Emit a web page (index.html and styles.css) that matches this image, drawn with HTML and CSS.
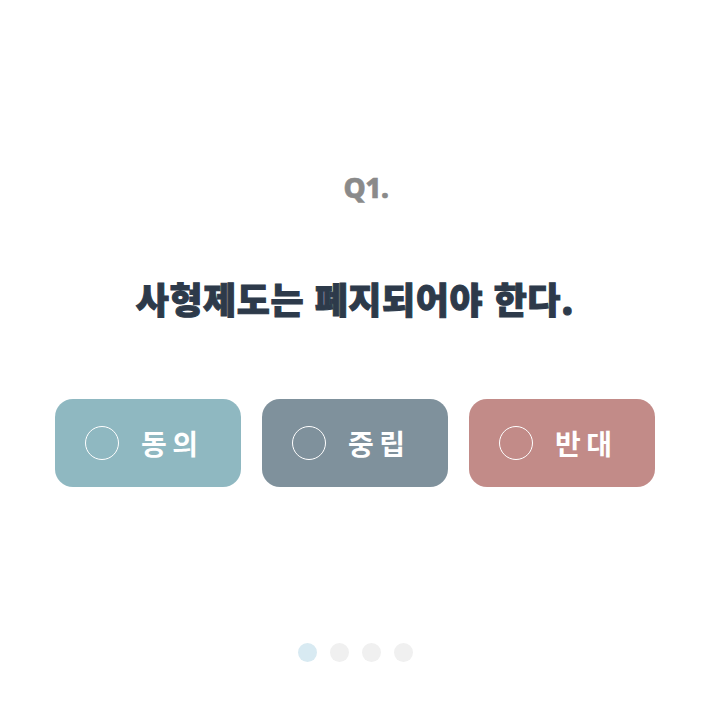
FILE: index.html
```html
<!DOCTYPE html>
<html lang="ko">
<head>
<meta charset="utf-8">
<link rel="stylesheet" href="styles.css">
</head>
<body>
<main class="page">
  <div class="qnum">Q1.</div>
  <h1 class="question">사형제도는 폐지되어야 한다.</h1>
  <div class="options">
    <button class="opt agree"><span class="ring"></span><span class="label">동의</span></button>
    <button class="opt neutral"><span class="ring"></span><span class="label">중립</span></button>
    <button class="opt oppose"><span class="ring"></span><span class="label">반대</span></button>
  </div>
  <div class="dots">
    <span class="dot active"></span>
    <span class="dot"></span>
    <span class="dot"></span>
    <span class="dot"></span>
  </div>
</main>
</body>
</html>
```
FILE: styles.css
```css
html, body {
  margin: 0;
  padding: 0;
  background: #ffffff;
}
.page {
  width: 710px;
  height: 710px;
  display: flex;
  flex-direction: column;
  align-items: center;
  font-family: "Noto Sans CJK KR", "Noto Sans", sans-serif;
}
.qnum {
  margin-top: 167px;
  padding-left: 22px;
  font-size: 28px;
  font-weight: 800;
  color: #8a8a8a;
  line-height: 40px;
  letter-spacing: -0.5px;
  font-family: "Noto Sans", "Noto Sans CJK KR", sans-serif;
  -webkit-text-stroke: 0.6px #8a8a8a;
}
.question {
  margin: 68px 0 0;
  font-size: 36px;
  font-weight: 900;
  color: #2d3a4a;
  line-height: 46px;
  letter-spacing: 0.55px;
  -webkit-text-stroke: 1px #2d3a4a;
}
.options {
  margin-top: 78px;
  display: flex;
  gap: 21px;
}
.opt {
  width: 186px;
  height: 88px;
  border: none;
  border-radius: 18px;
  display: flex;
  align-items: center;
  padding: 0 0 0 30px;
  color: #ffffff;
  font-family: inherit;
}
.agree { background: #8fb8c1; }
.neutral { background: #7f919c; }
.oppose { background: #c28b88; }
.ring {
  width: 34px;
  height: 34px;
  border: 1.6px solid #ffffff;
  border-radius: 50%;
  box-sizing: border-box;
}
.label {
  margin-left: 22px;
  font-size: 28px;
  font-weight: 700;
  letter-spacing: 5.5px;
  line-height: 1;
}
.dots {
  margin-top: 156px;
  display: flex;
  gap: 13px;
}
.dot {
  width: 19px;
  height: 19px;
  border-radius: 50%;
  background: #f0f0f0;
}
.dot.active { background: #d8eaf2; }
```
